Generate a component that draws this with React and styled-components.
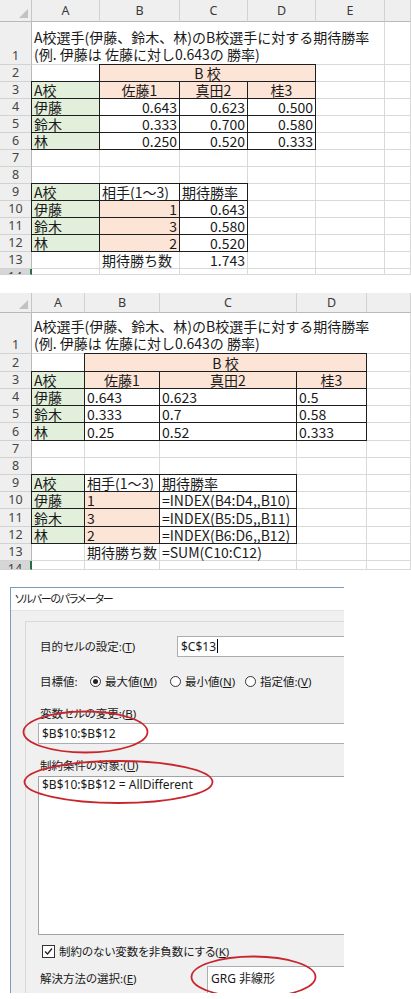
import React from "react";
import styled, { createGlobalStyle, css } from "styled-components";

const GlobalStyle = createGlobalStyle`
  html, body { margin: 0; padding: 0; background: #fff; }
  body { font-family: "Noto Sans", "Noto Sans CJK JP", sans-serif; }
`;

const GREEN = "#e2efda";
const PEACH = "#fce4d6";
const GRID = "#d9d9d9";
const HEAD_BG = "#efefef";

const Page = styled.div`
  width: 411px;
  height: 999px;
  overflow: hidden;
  display: flex;
  flex-direction: column;
`;

const SheetGrid = styled.div`
  display: grid;
  grid-template-columns: ${(p) => p.$cols.map((c) => c + "px").join(" ")};
  grid-template-rows: ${(p) => p.$rows.map((r) => r + "px").join(" ")};
  margin-top: ${(p) => p.$top}px;
  overflow: hidden;
  font-family: "Noto Sans CJK JP", sans-serif;
  font-size: 14px;
  color: #1a1a1a;
`;

const Corner = styled.div`
  background: ${HEAD_BG};
  border-right: 1px solid #c6c6c6;
  border-bottom: 1px solid #b9b9b9;
  position: relative;
  &::after {
    content: "";
    position: absolute;
    right: 3px;
    bottom: 3px;
    border-style: solid;
    border-width: 0 0 9px 9px;
    border-color: transparent transparent #c2c2c2 transparent;
  }
`;

const ColHead = styled.div`
  background: ${HEAD_BG};
  border-right: 1px solid #d2d2d2;
  border-bottom: 1px solid #b9b9b9;
  display: flex;
  align-items: center;
  justify-content: center;
  font-family: "Noto Sans", sans-serif;
  font-size: 12.5px;
  color: #3a3a3a;
`;

const RowHead = styled.div`
  background: ${(p) => (p.$sel ? "#d6d6d6" : HEAD_BG)};
  border-right: ${(p) => (p.$sel ? "2px solid #217346" : "1px solid #b9b9b9")};
  border-bottom: 1px solid #d2d2d2;
  display: flex;
  align-items: ${(p) => (p.$sel ? "flex-start" : "flex-end")};
  justify-content: center;
  overflow: hidden;
  font-family: "Noto Sans", sans-serif;
  font-size: 12.5px;
  line-height: 16px;
  color: #444;
`;

const Cell = styled.div`
  background: ${(p) => p.$bg || "#fff"};
  border-right: 1px solid ${GRID};
  border-bottom: 1px solid ${GRID};
  padding: 0 2px;
  display: flex;
  align-items: flex-end;
  justify-content: ${(p) =>
    p.$align === "right" ? "flex-end" : p.$align === "center" ? "center" : "flex-start"};
  white-space: nowrap;
  line-height: 16px;
  min-width: 0;
  ${(p) => p.$span && css`grid-column: span ${p.$span};`}
  ${(p) =>
    p.$box &&
    css`
      border: 1px solid #1e1e1e;
      margin: -1px 0 0 -1px;
      position: relative;
      z-index: 1;
    `}
`;

const TitleCell = styled.div`
  grid-column: span ${(p) => p.$span};
  border-right: 1px solid ${GRID};
  border-bottom: 1px solid ${GRID};
  padding: 0 2px 1px;
  display: flex;
  flex-direction: column;
  justify-content: flex-end;
  white-space: nowrap;
  line-height: 17px;
`;

const sheetCells = (values, inputs, results, total, numeric) => {
  const cells = {
    "2-2": { text: "B 校", bg: PEACH, align: "center", box: true, span: 3 },
    "3-1": { text: "A校", bg: GREEN, box: true },
    "3-2": { text: "佐藤1", bg: PEACH, align: "center", box: true },
    "3-3": { text: "真田2", bg: PEACH, align: "center", box: true },
    "3-4": { text: "桂3", bg: PEACH, align: "center", box: true },
    "9-1": { text: "A校", bg: GREEN, box: true },
    "9-2": { text: "相手(1〜3)", box: true },
    "9-3": { text: "期待勝率", box: true },
    "13-2": { text: "期待勝ち数" },
    "13-3": { text: total, align: numeric ? "right" : "left" },
  };
  const names = ["伊藤", "鈴木", "林"];
  names.forEach((n, i) => {
    cells[`${4 + i}-1`] = { text: n, bg: GREEN, box: true };
    cells[`${10 + i}-1`] = { text: n, bg: GREEN, box: true };
    values[i].forEach((v, j) => {
      cells[`${4 + i}-${2 + j}`] = { text: v, box: true, align: numeric ? "right" : "left" };
    });
    cells[`${10 + i}-2`] = { text: inputs[i], bg: PEACH, box: true, align: numeric ? "right" : "left" };
    cells[`${10 + i}-3`] = { text: results[i], box: true, align: numeric ? "right" : "left" };
  });
  return cells;
};

const TITLE = [
  "A校選手(伊藤、鈴木、林)のB校選手に対する期待勝率",
  "(例. 伊藤は 佐藤に対し0.643の 勝率)",
];

const sheetOne = {
  top: 0,
  cols: [32, 68, 80, 68, 68, 69, 26],
  letters: ["A", "B", "C", "D", "E", ""],
  headH: 22,
  rows: [43, 17, 17, 17, 17, 17, 17, 17, 17, 17, 17, 17, 17, 6],
  titleSpan: 5,
  cells: sheetCells(
    [
      ["0.643", "0.623", "0.500"],
      ["0.333", "0.700", "0.580"],
      ["0.250", "0.520", "0.333"],
    ],
    ["1", "3", "2"],
    ["0.643", "0.580", "0.520"],
    "1.743",
    true
  ),
};

const sheetTwo = {
  top: 18,
  cols: [32, 53, 75, 137, 70, 44],
  letters: ["A", "B", "C", "D", ""],
  headH: 20,
  rows: [41, 18, 17, 17, 17, 18, 17, 17, 17, 17, 18, 17, 17, 9],
  titleSpan: 5,
  cells: sheetCells(
    [
      ["0.643", "0.623", "0.5"],
      ["0.333", "0.7", "0.58"],
      ["0.25", "0.52", "0.333"],
    ],
    ["1", "3", "2"],
    ["=INDEX(B4:D4,,B10)", "=INDEX(B5:D5,,B11)", "=INDEX(B6:D6,,B12)"],
    "=SUM(C10:C12)",
    false
  ),
};

function Sheet({ data }) {
  const { cols, letters, headH, rows, titleSpan, cells, top } = data;
  const out = [<Corner key="corner" />];
  letters.forEach((l, i) => out.push(<ColHead key={"h" + i}>{l}</ColHead>));
  rows.forEach((h, ri) => {
    const r = ri + 1;
    out.push(
      <RowHead key={"r" + r} $sel={r === rows.length}>
        {r}
      </RowHead>
    );
    if (r === 1) {
      out.push(
        <TitleCell key="title" $span={titleSpan}>
          {TITLE.map((t) => (
            <div key={t}>{t}</div>
          ))}
        </TitleCell>
      );
      for (let c = titleSpan + 1; c < cols.length; c++) out.push(<Cell key={"1-" + c} />);
      return;
    }
    let c = 1;
    while (c < cols.length) {
      const spec = cells[`${r}-${c}`] || {};
      out.push(
        <Cell key={`${r}-${c}`} $bg={spec.bg} $align={spec.align} $box={spec.box} $span={spec.span}>
          {spec.text}
        </Cell>
      );
      c += spec.span || 1;
    }
  });
  return (
    <SheetGrid $cols={cols} $rows={[headH, ...rows]} $top={top}>
      {out}
    </SheetGrid>
  );
}

/* ---------- solver dialog ---------- */

const Dialog = styled.div`
  position: relative;
  margin: 17px 0 0 10px;
  width: 334px;
  height: 406px;
  box-sizing: border-box;
  border-left: 1px solid #7e99bb;
  border-top: 1px solid #7e99bb;
  background: #f0f0f0;
  overflow: hidden;
  font-family: "Noto Sans", "Noto Sans CJK JP", sans-serif;
  font-feature-settings: "palt";
  font-size: 11.5px;
  color: #1a1a1a;
`;

const TitleBar = styled.div`
  height: 22px;
  line-height: 22px;
  padding-left: 4px;
  background: #fff;
  font-size: 11px;
  letter-spacing: -1.3px;
`;

const DialogBody = styled.div`
  padding: 10px 0 0 14px;
  border-top: 1px solid #e4e4e4;
`;

const Panel = styled.div`
  margin-right: -40px;
  height: 400px;
  border-left: 1px solid #d9d9d9;
  border-top: 1px solid #d9d9d9;
  padding: 14px 0 0 12px;
  display: flex;
  flex-direction: column;
`;

const FieldRow = styled.div`
  display: grid;
  grid-template-columns: ${(p) => p.$labelW}px 1fr;
  align-items: ${(p) => p.$align || "center"};
  margin-top: ${(p) => p.$mt || 0}px;
`;

const Label = styled.div`
  padding-left: 2px;
  line-height: 16px;
  white-space: nowrap;
  margin-top: ${(p) => p.$mt || 0}px;
`;

const Key = styled.span`
  text-decoration: underline;
  text-underline-offset: 1px;
`;

const TextBox = styled.div`
  height: 21px;
  box-sizing: border-box;
  background: #fff;
  border: 1px solid #abadb3;
  padding: 0 3px;
  line-height: 19px;
  font-size: 12px;
  white-space: nowrap;
  margin-top: ${(p) => p.$mt || 0}px;
`;

const Caret = styled.span`
  display: inline-block;
  width: 1px;
  height: 14px;
  background: #000;
  margin-left: 1px;
  vertical-align: -2px;
`;

const RadioRow = styled.div`
  display: flex;
  align-items: center;
  height: 20px;
  margin-top: 14px;
`;

const RadioLead = styled.div`
  width: 50px;
  padding-left: 2px;
`;

const RadioOption = styled.div`
  display: flex;
  align-items: center;
  gap: 4px;
  width: ${(p) => (p.$w ? p.$w + "px" : "auto")};
  white-space: nowrap;
`;

const RadioDot = styled.span`
  width: 11px;
  height: 11px;
  box-sizing: border-box;
  border-radius: 50%;
  border: 1px solid #333;
  background: #fff;
  display: flex;
  align-items: center;
  justify-content: center;
  &::after {
    content: "";
    width: 5px;
    height: 5px;
    border-radius: 50%;
    background: ${(p) => (p.$on ? "#222" : "transparent")};
  }
`;

const ListBox = styled.div`
  height: 159px;
  box-sizing: border-box;
  margin-top: 2px;
  background: #fff;
  border: 1px solid #a3a3a3;
  padding: 0 3px;
  line-height: 16px;
  font-size: 12px;
`;

const CheckRow = styled.div`
  display: flex;
  align-items: center;
  gap: 4px;
  height: 16px;
  margin-top: 8px;
  padding-left: 4px;
  white-space: nowrap;
`;

const CheckBox = styled.span`
  width: 13px;
  height: 13px;
  box-sizing: border-box;
  border: 1px solid #333;
  background: #fff;
  display: flex;
`;

const SelectBox = styled.div`
  height: 34px;
  box-sizing: border-box;
  background: #fff;
  border: 1px solid #abadb3;
  padding: 4px 3px 0;
  line-height: 16px;
  font-size: 12px;
  white-space: nowrap;
`;

const Marks = styled.svg`
  position: absolute;
  left: 0;
  top: 0;
  width: 334px;
  height: 406px;
  pointer-events: none;
`;

function SolverDialog() {
  return (
    <Dialog>
      <TitleBar>ソルバーのパラメーター</TitleBar>
      <DialogBody>
        <Panel>
          <FieldRow $labelW={139}>
            <Label>
              目的セルの設定:(<Key>T</Key>)
            </Label>
            <TextBox>
              $C$13
              <Caret />
            </TextBox>
          </FieldRow>
          <RadioRow>
            <RadioLead>目標値:</RadioLead>
            <RadioOption $w={80}>
              <RadioDot $on />
              <span>
                最大値(<Key>M</Key>)
              </span>
            </RadioOption>
            <RadioOption $w={75}>
              <RadioDot />
              <span>
                最小値(<Key>N</Key>)
              </span>
            </RadioOption>
            <RadioOption>
              <RadioDot />
              <span>
                指定値:(<Key>V</Key>)
              </span>
            </RadioOption>
          </RadioRow>
          <Label $mt={15}>
            変数セルの変更:(<Key>B</Key>)
          </Label>
          <TextBox $mt={1}>$B$10:$B$12</TextBox>
          <Label $mt={14}>
            制約条件の対象:(<Key>U</Key>)
          </Label>
          <ListBox>$B$10:$B$12 = AllDifferent</ListBox>
          <CheckRow>
            <CheckBox>
              <svg width="11" height="11" viewBox="0 0 11 11">
                <polyline points="2,5.5 4.5,8 9,2.5" fill="none" stroke="#222" strokeWidth="1.3" />
              </svg>
            </CheckBox>
            <span>
              制約のない変数を非負数にする(<Key>K</Key>)
            </span>
          </CheckRow>
          <FieldRow $labelW={169} $align="start" $mt={7}>
            <Label $mt={5}>
              解決方法の選択:(<Key>E</Key>)
            </Label>
            <SelectBox>GRG 非線形</SelectBox>
          </FieldRow>
        </Panel>
      </DialogBody>
      <Marks viewBox="0 0 334 406">
        <ellipse cx="74.5" cy="144" rx="62" ry="20.5" fill="none" stroke="#c8262c" strokeWidth="1.8" />
        <ellipse cx="107.5" cy="194" rx="94" ry="21" fill="none" stroke="#c8262c" strokeWidth="1.8" />
        <ellipse cx="242.5" cy="389" rx="62" ry="20.5" fill="none" stroke="#c8262c" strokeWidth="1.8" />
      </Marks>
    </Dialog>
  );
}

export default function App() {
  return (
    <Page>
      <GlobalStyle />
      <Sheet data={sheetOne} />
      <Sheet data={sheetTwo} />
      <SolverDialog />
    </Page>
  );
}
